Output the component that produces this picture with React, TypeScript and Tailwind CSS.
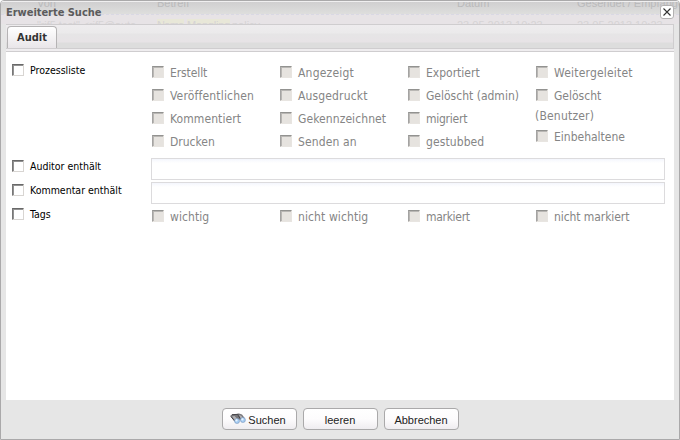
import React from "react";

const SANS = "font-['DejaVu_Sans_Condensed','DejaVu_Sans',sans-serif] [font-stretch:condensed]";

function Box({ disabled = false }: { disabled?: boolean }) {
  return (
    <span
      className={
        "inline-block h-3 w-3 shrink-0 border " +
        (disabled
          ? "border-t-[#929290] border-l-[#a4a3a2] border-r-[#e8e5e1] border-b-[#e8e5e1] bg-[#e6e3df] shadow-[inset_1px_1px_0_#b9b7b4]"
          : "border-t-[#686868] border-l-[#777777] border-r-[#d8d5d2] border-b-[#d8d5d2] bg-white shadow-[inset_1px_1px_0_#929292]")
      }
    />
  );
}

function Label({ text }: { text: string }) {
  return (
    <div className="flex h-3 w-[145px] shrink-0 items-center gap-1.5">
      <Box />
      <span className="text-[10.5px] leading-3 whitespace-nowrap text-black">{text}</span>
    </div>
  );
}

function Option({ text, track = "tracking-normal", extra }: { text: string; track?: string; extra?: string }) {
  return (
    <div className="text-[12px] text-[#858585]">
      <div className="flex h-[23px] items-start gap-1.5">
        <Box disabled />
        <span className={"mt-px leading-3 whitespace-nowrap " + track}>{text}</span>
      </div>
      {extra && <div className="-mt-[3px] -ml-px h-[21px] leading-[14px] tracking-[0.2px]">{extra}</div>}
    </div>
  );
}

function Button({ children }: { children: React.ReactNode }) {
  return (
    <button className="flex h-[22px] w-[75px] items-center justify-center gap-0.5 rounded-[4px] border border-[#aaa9aa] bg-linear-to-b from-white via-[#fdfcfd] to-[#efedf0] pt-0.5 font-['Liberation_Sans',Arial,sans-serif] text-[11px] text-[#222]">
      {children}
    </button>
  );
}

function Binoculars() {
  return (
    <svg className="-mt-0.5 -ml-0.5 shrink-0" width="16" height="12" viewBox="0 0 16 12">
      <path d="M.3 2.8 2.2 1.2 5.5 1.2 9 .4 12 1.6 15 5.5 13 6.5 10 7 7.5 6 5 8.7Z" fill="#77767a" />
      <path d="M2 3.4 4.5 3l3 3L5 7.2ZM9 2l2.2.8L13.4 5.6l-2.4.5Z" fill="#b4b3b5" />
      <path d="M.8 3.4 4.6 8M2 1.7l6.5-.4M8 2.2l2.2 3.4" stroke="#454448" strokeWidth="1" fill="none" />
      <circle cx="7" cy="8" r="2.5" fill="#a5cbf2" stroke="#7896bb" strokeWidth=".6" />
      <circle cx="12.9" cy="7" r="2.5" fill="#a5cbf2" stroke="#7896bb" strokeWidth=".6" />
      <circle cx="6.5" cy="7.4" r="1.1" fill="#e9f5ff" />
      <circle cx="12.4" cy="6.4" r="1.1" fill="#e9f5ff" />
    </svg>
  );
}

function Ghost({ text, place }: { text: string; place: string }) {
  return <span className={"absolute text-[11px] leading-3 whitespace-nowrap " + place}>{text}</span>;
}

export default function App() {
  return (
    <div className={"flex h-[440px] w-[680px] flex-col overflow-hidden rounded-t-[4px] border border-[#aaa9aa] bg-[#e6e6e6] " + SANS}>
      <header className="relative h-[23px] shrink-0 overflow-hidden border-t border-[#f0eff0] bg-[#e7e3e6] font-['Liberation_Sans',Arial,sans-serif]">
        <div className="h-3 bg-linear-to-b from-[#d0cfd0] to-[#dededd]" />
        <div className="border-b border-dashed border-[#d9d8e4]" />
        <div className="absolute inset-0 text-[#bababb]">
          <Ghost text="Von" place="left-[36px] -top-[5px]" />
          <Ghost text="Betreff" place="left-[156px] -top-[5px]" />
          <Ghost text="Datum" place="left-[456px] -top-[5px]" />
          <Ghost text="Gesendet / Empfangen" place="left-[576px] -top-[5px]" />
        </div>
        <div className="absolute inset-0 text-[#d6d3d5]">
          <Ghost text={"\"rif5 test\" <rif5@auto..."} place="left-[36px] top-[17px] tracking-[-0.1px]" />
          <Ghost text="Name" place="left-[156px] top-[17px] bg-[#e8e7d8] tracking-[-0.7px]" />
          <Ghost text="Mangling" place="left-[186px] top-[17px] bg-[#e8e7d8] tracking-[-0.2px]" />
          <Ghost text="policy" place="left-[231px] top-[17px]" />
          <Ghost text="23.05.2013 10:23" place="left-[456px] top-[17px]" />
          <Ghost text="23.05.2013 10:23" place="left-[576px] top-[17px]" />
        </div>
        <div className={"absolute inset-0 flex items-start justify-between pt-[3px] pl-[5px] " + SANS}>
          <h1 className="mt-px text-[11px] leading-[13px] font-bold tracking-[-0.03px] text-[#5c5b5c]">Erweiterte Suche</h1>
          <button className="mr-[5px] flex h-[14px] w-[14px] items-center justify-center rounded-[3px] border border-[#b3b1b2] bg-white">
            <svg width="8" height="8" viewBox="0 0 8 8"><path d="M.5.5l7 7M7.5.5l-7 7" stroke="#333" strokeWidth="1.1" /></svg>
          </button>
        </div>
      </header>

      <main className="mx-[5px] flex h-[376px] shrink-0 flex-col bg-white">
        <div className="flex h-6 shrink-0 items-end border-t border-r border-[#cfcdcf] bg-[linear-gradient(to_bottom,#eeecee_0px,#ebeaeb_8px,#e6e5e6_9px,#e7e3e6_17px,#dddddd_18px,#dddddd_24px)]">
          <div className="ml-px flex h-[22px] w-[50px] items-center justify-center rounded-t-[4px] border border-b-0 border-[#b5b3b4] bg-linear-to-b from-white to-[#e9e6e9] pt-0.5 text-[11px] font-bold text-[#333]">Audit</div>
        </div>
        <div className="h-1 shrink-0 border-y border-[#cfcdcf] bg-[#efedef]" />
        <div className="flex flex-1 flex-col pt-3 pl-1.5">
          <div className="flex h-[94px]">
            <Label text="Prozessliste" />
            <div className="-ml-[5px] grid h-[92px] grid-cols-[128px_128px_128px_110px] pt-0.5">
              <div><Option text="Erstellt" track="tracking-[-0.1px]" /><Option text="Veröffentlichen" track="tracking-[0.17px]" /><Option text="Kommentiert" track="tracking-[0.08px]" /><Option text="Drucken" /></div>
              <div><Option text="Angezeigt" track="tracking-[0.2px]" /><Option text="Ausgedruckt" track="tracking-[0.15px]" /><Option text="Gekennzeichnet" track="tracking-[0.08px]" /><Option text="Senden an" track="tracking-[0.12px]" /></div>
              <div><Option text="Exportiert" /><Option text="Gelöscht (admin)" /><Option text="migriert" track="tracking-[-0.25px]" /><Option text="gestubbed" track="tracking-[0.1px]" /></div>
              <div><Option text="Weitergeleitet" track="tracking-[0.2px]" /><Option text="Gelöscht" extra="(Benutzer)" /><Option text="Einbehaltene" /></div>
            </div>
          </div>
          <div className="flex h-6 pt-0.5">
            <Label text="Auditor enthält" />
            <input className="-mt-[2px] -ml-[6px] h-[22px] w-[514px] shrink-0 border border-[#dcdbdd] bg-linear-to-b from-[#f4f6fd] to-white to-20%" />
          </div>
          <div className="flex h-6 pt-0.5">
            <Label text="Kommentar enthält" />
            <input className="-mt-[2px] -ml-[6px] h-[22px] w-[514px] shrink-0 border border-[#dcdbdd] bg-linear-to-b from-[#f4f6fd] to-white to-20%" />
          </div>
          <div className="flex h-6 pt-0.5">
            <Label text="Tags" />
            <div className="-ml-[5px] grid grid-cols-[128px_128px_128px_110px] pt-0.5">
              <Option text="wichtig" track="tracking-[0.08px]" /><Option text="nicht wichtig" track="tracking-[0.1px]" /><Option text="markiert" track="tracking-[-0.3px]" /><Option text="nicht markiert" track="tracking-[-0.08px]" />
            </div>
          </div>
        </div>
      </main>
      <footer className="flex flex-1 justify-center gap-1.5 pt-2">
        <Button><Binoculars />Suchen</Button><Button>leeren</Button><Button>Abbrechen</Button>
      </footer>
    </div>
  );
}
